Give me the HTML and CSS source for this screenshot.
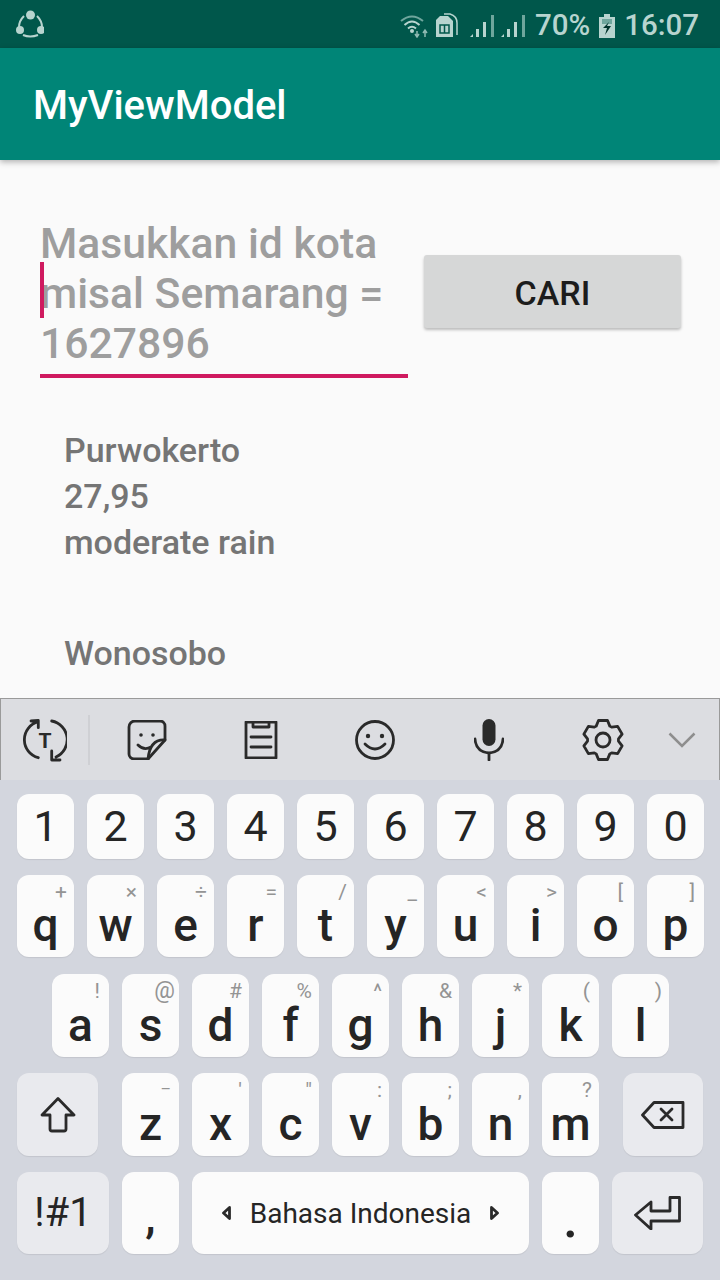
FILE: index.html
```html
<!DOCTYPE html>
<html lang="en">
  <head>
    <meta charset="UTF-8" />
    <meta name="viewport" content="width=device-width, initial-scale=1.0" />
    <title>MyViewModel</title>

    <link rel="stylesheet" href="styles.css">
  </head>
  <body>
    <!-- Status bar -->
    <div class="status-bar">
      <svg class="share-icon" width="28" height="28" viewBox="0 0 28 28">
        <path d="M8 6 Q3 11 3 17 M21 6 Q26 11 26 17 M7 25 Q14 28 22 25" fill="none" stroke="#b7d4cf" stroke-width="2" />
        <circle cx="14.5" cy="5" r="4.5" fill="#b7d4cf" />
        <circle cx="4" cy="20" r="4" fill="#b7d4cf" />
        <circle cx="25" cy="20" r="4" fill="#b7d4cf" />
      </svg>
      <div class="status-right">
        <svg class="wifi-icon" width="29" height="24" viewBox="0 0 29 24">
          <path d="M1 7 Q12 -2 23 7" fill="none" stroke="#6fa69d" stroke-width="2" />
          <path d="M4.5 11 Q12 4 19.500 11" fill="none" stroke="#b7d4cf" stroke-width="2" />
          <path d="M8 14.500 Q12 11 16 14.500" fill="none" stroke="#b7d4cf" stroke-width="2" />
          <circle cx="12" cy="17" r="2" fill="#b7d4cf" />
          <path d="M17 17 v5 M15 20 l2 3 l2 -3" fill="none" stroke="#8fbab3" stroke-width="1.500" />
          <path d="M25 23 v-6 M23 19 l2 -3 l2 3" fill="none" stroke="#8fbab3" stroke-width="1.500" />
        </svg>
        <svg class="sim-icon" width="23" height="25" viewBox="0 0 23 25">
          <path d="M5 3 H13 L18 8 V24 H1 V7 Z" fill="#b7d4cf" />
          <path d="M9 1 H15 Q22 3 22 10 V22" fill="none" stroke="#b7d4cf" stroke-width="1.500" />
          <rect x="5" y="12" width="9" height="8" fill="none" stroke="#00574b" stroke-width="1.500" />
          <path d="M9.500 12 v8" stroke="#00574b" stroke-width="1.500" />
        </svg>
        <svg class="signal-icon" width="25" height="24" viewBox="0 0 25 24">
          <path d="M0 23 L3 20 V23 Z" fill="#b7d4cf" />
          <rect x="6" y="15" width="3" height="8" fill="#b7d4cf" />
          <rect x="13" y="8" width="3" height="15" fill="#b7d4cf" />
          <rect x="21" y="1" width="3" height="22" fill="#6fa69d" />
        </svg>
        <svg class="signal-icon" width="25" height="24" viewBox="0 0 25 24">
          <path d="M0 23 L3 20 V23 Z" fill="#b7d4cf" />
          <rect x="6" y="15" width="3" height="8" fill="#b7d4cf" />
          <rect x="13" y="8" width="3" height="15" fill="#b7d4cf" />
          <rect x="21" y="1" width="3" height="22" fill="#6fa69d" />
        </svg>
        <span class="battery-text">70%</span>
        <svg class="battery-icon" width="16" height="24" viewBox="0 0 16 24">
          <path d="M5 0 H11 V3 H16 V24 H0 V3 H5 Z" fill="#b7d4cf" />
          <path d="M3 5 H13 V10 H3 Z" fill="#6fa69d" />
          <path d="M10 8 L4 14 H8 L6 21 L12 12 H8 Z" fill="#00332c" />
        </svg>
        <span class="clock">16:07</span>
      </div>
    </div>

    <!-- App bar -->
    <div class="app-bar">
      <h1 class="app-title">MyViewModel</h1>
    </div>

    <!-- Main content -->
    <div class="content">
      <div class="search-row">
        <div class="edit-text">
          <span class="cursor"></span>
          Masukkan id kota misal Semarang = 1627896
        </div>
        <button class="search-button">CARI</button>
      </div>

      <div class="weather-list">
        <div class="weather-item">Purwokerto<br />27,95<br />moderate rain</div>
        <div class="weather-item">Wonosobo</div>
      </div>
    </div>

    <!-- Keyboard -->
    <div class="keyboard">
      <div class="toolbar">
        <div class="tool tool-first">
          <svg width="44" height="44" viewBox="0 0 44 44">
            <path d="M15.300 3.700 A18.600 18.600 0 0 0 15.300 39.700 M8 3 L15.300 2.500 V9.700" class="line" />
            <path d="M28.700 3 A19 19 0 0 1 33 39 M28.700 33 V42 H37" class="line" />
            <text x="22" y="30" class="tool-t">T</text>
          </svg>
        </div>
        <div class="tool-sep"></div>
        <div class="tool">
          <svg width="40" height="40" viewBox="0 0 40 40">
            <path d="M8 1 H33 A5 5 0 0 1 38 6 V20 L21 39 H7 A5 5 0 0 1 2 34 V7 A6 6 0 0 1 8 1 Z" class="line" />
            <path d="M38 20 Q23 19 21 39 M11 25 Q17 31 24 27" class="line" />
            <circle cx="14" cy="15" r="1.800" class="dot" />
            <circle cx="26" cy="15" r="1.800" class="dot" />
          </svg>
        </div>
        <div class="tool">
          <svg width="34" height="38" viewBox="0 0 34 38">
            <path d="M2 1 H32 V37 H2 Z M9 1 V6 H25 V1" class="line" />
            <path d="M7 16 H27 M7 26 H27" class="line" />
          </svg>
        </div>
        <div class="tool">
          <svg width="40" height="40" viewBox="0 0 40 40">
            <circle cx="20" cy="20" r="18.500" class="line" />
            <circle cx="13" cy="16" r="2.200" class="dot" />
            <circle cx="27" cy="16" r="2.200" class="dot" />
            <path d="M10 24 Q20 34 30 24" class="line" />
          </svg>
        </div>
        <div class="tool">
          <svg width="30" height="42" viewBox="0 0 30 42">
            <rect x="8.500" y="0" width="13" height="27" rx="6.500" class="dot" />
            <path d="M1 20 Q2 33 15 34 Q28 33 29 20 M15 34 V41" class="line" />
          </svg>
        </div>
        <div class="tool">
          <svg width="42" height="42" viewBox="-21 -21 42 42">
            <path d="M-6.800 -13.900 L-4.500 -19.500 L4.500 -19.500 L6.800 -13.900 L8.670 -12.850 L14.630 -13.640 L19.130 -5.850 L15.460 -1.080 L15.460 1.080 L19.130 5.850 L14.630 13.640 L8.670 12.850 L6.800 13.900 L4.500 19.500 L-4.500 19.500 L-6.800 13.900 L-8.670 12.850 L-14.630 13.640 L-19.130 5.850 L-15.460 1.080 L-15.460 -1.080 L-19.130 -5.850 L-14.630 -13.640 L-8.670 -12.850 Z" class="line" />
            <circle cx="0" cy="0" r="7" class="line" />
          </svg>
        </div>
        <div class="tool tool-last">
          <svg width="28" height="16" viewBox="0 0 28 16">
            <path d="M1.500 1.500 L14 14 L26.500 1.500" class="chevron" />
          </svg>
        </div>
      </div>

      <div class="keys">
        <div class="key-row row-digits">
          <div class="key"><span>1</span></div>
          <div class="key"><span>2</span></div>
          <div class="key"><span>3</span></div>
          <div class="key"><span>4</span></div>
          <div class="key"><span>5</span></div>
          <div class="key"><span>6</span></div>
          <div class="key"><span>7</span></div>
          <div class="key"><span>8</span></div>
          <div class="key"><span>9</span></div>
          <div class="key"><span>0</span></div>
        </div>
        <div class="key-row row-top">
          <div class="key"><i>+</i><span>q</span></div>
          <div class="key"><i>×</i><span>w</span></div>
          <div class="key"><i>÷</i><span>e</span></div>
          <div class="key"><i>=</i><span>r</span></div>
          <div class="key"><i>/</i><span>t</span></div>
          <div class="key"><i>_</i><span>y</span></div>
          <div class="key"><i>&lt;</i><span>u</span></div>
          <div class="key"><i>&gt;</i><span>i</span></div>
          <div class="key"><i class="sym-bracket">[</i><span>o</span></div>
          <div class="key"><i class="sym-bracket-end">]</i><span>p</span></div>
        </div>
        <div class="key-row row-home">
          <div class="key"><i class="sym-bang">!</i><span>a</span></div>
          <div class="key"><i class="sym-at">@</i><span>s</span></div>
          <div class="key"><i>#</i><span>d</span></div>
          <div class="key"><i>%</i><span>f</span></div>
          <div class="key"><i>^</i><span>g</span></div>
          <div class="key"><i>&amp;</i><span>h</span></div>
          <div class="key"><i>*</i><span>j</span></div>
          <div class="key"><i class="sym-bang">(</i><span>k</span></div>
          <div class="key"><i>)</i><span>l</span></div>
        </div>
        <div class="key-row row-bottom">
          <div class="key key-fn key-shift">
            <svg width="36" height="36" viewBox="0 0 36 36">
              <path d="M18 1.500 L34 18 H26 V32 A2 2 0 0 1 24 34 H12 A2 2 0 0 1 10 32 V18 H2 Z" class="line" />
            </svg>
          </div>
          <div class="key"><i class="sym-dash">–</i><span>z</span></div>
          <div class="key"><i>'</i><span>x</span></div>
          <div class="key"><i>"</i><span>c</span></div>
          <div class="key"><i>:</i><span>v</span></div>
          <div class="key"><i>;</i><span>b</span></div>
          <div class="key"><i>,</i><span>n</span></div>
          <div class="key"><i>?</i><span>m</span></div>
          <div class="key key-fn key-back">
            <svg width="44" height="28" viewBox="0 0 44 28">
              <path d="M1.500 14 L13 1.500 H42 V26.500 H13 Z" class="line" />
              <path d="M20 8 L31 19 M31 8 L20 19" class="line" />
            </svg>
          </div>
        </div>
        <div class="key-row row-space">
          <div class="key key-fn key-symbols"><span>!#1</span></div>
          <div class="key key-comma"><span>,</span></div>
          <div class="key key-space">
            <svg width="9" height="14" viewBox="0 0 9 14"><path d="M7.500 1.500 L1.500 7 L7.500 12.500 Z" class="line" /></svg>
            <span>Bahasa Indonesia</span>
            <svg width="9" height="14" viewBox="0 0 9 14"><path d="M1.500 1.500 L7.500 7 L1.500 12.500 Z" class="line" /></svg>
          </div>
          <div class="key key-period"><span>.</span></div>
          <div class="key key-fn key-enter">
            <svg width="47" height="34" viewBox="0 0 47 34">
              <path d="M1.500 19 L17 6 V15 H36 V1.500 H45.500 V25 H17 V33 Z" class="line" />
            </svg>
          </div>
        </div>
      </div>
    </div>
  </body>
</html>
```

FILE: styles.css
```css
* {
  box-sizing: border-box;
}

html,
body {
  margin: 0;
  height: 1280px;
  overflow: hidden;
}

body {
  display: flex;
  flex-direction: column;
  width: 720px;
  background: #fafafa;
  font-family: Roboto, "Noto Sans", sans-serif;
}

/* Status bar */
.status-bar {
  flex: none;
  display: flex;
  justify-content: space-between;
  align-items: center;
  height: 48px;
  padding: 0 21px 0 16px;
  background: #00574b;
  color: #b7d4cf;
}

.status-right {
  display: flex;
  align-items: center;
  padding-top: 3px;
}

.wifi-icon {
  margin-right: 6px;
}

.sim-icon {
  margin-right: 12px;
}

.signal-icon {
  margin-right: 6px;
}

.signal-icon + .battery-text {
  margin-left: 3px;
}

.battery-text,
.clock {
  font-size: 29.500px;
  font-weight: 500;
  line-height: 45px;
}

.battery-icon {
  margin: 0 9px;
}

/* App bar */
.app-bar {
  position: relative;
  z-index: 1;
  flex: none;
  display: flex;
  align-items: center;
  height: 112px;
  padding: 3px 33px 0;
  background: #008577;
  box-shadow: 0 2px 6px rgba(0, 0, 0, 0.3);
}

.app-title {
  margin: 0;
  color: #fff;
  font-size: 40px;
  font-weight: 500;
}

/* Main content */
.content {
  flex: 1;
  min-height: 0;
  overflow: hidden;
}

.search-row {
  display: flex;
  align-items: flex-start;
  padding: 58px 0 0 40px;
}

.edit-text {
  position: relative;
  width: 368px;
  height: 160px;
  border-bottom: 4px solid #cf1a5f;
  color: #9e9e9e;
  font-size: 42.700px;
  font-weight: 500;
  line-height: 50px;
}

.cursor {
  position: absolute;
  left: 0;
  top: 44px;
  width: 4px;
  height: 56px;
  background: #cf1a5f;
}

.search-button {
  width: 257px;
  height: 73px;
  margin: 37px 0 0 16px;
  padding-top: 3px;
  border: 0;
  border-radius: 3px;
  background: #d6d7d7;
  box-shadow: 0 2px 3px rgba(0, 0, 0, 0.25);
  color: #1c1c1c;
  font-family: inherit;
  font-size: 34px;
  font-weight: 500;
}

.weather-list {
  margin: 49px 0 0 64px;
  color: #757575;
  font-size: 34px;
  font-weight: 500;
  line-height: 46px;
}

.weather-item {
  margin-bottom: 65px;
}

/* Keyboard */
.keyboard {
  flex: none;
  height: 582px;
  background: #d3d6de;
}

.toolbar {
  display: flex;
  align-items: center;
  height: 82px;
  border: 1px solid #9a9a9a;
  border-bottom: 0;
  background: #dcdde1;
}

.tool {
  display: flex;
  justify-content: center;
  align-items: center;
  width: 114px;
}

.tool-first {
  width: 87px;
}

.tool-last {
  width: 44px;
}

.tool-sep {
  width: 2px;
  height: 50px;
  background: #cfd0d4;
}

.line {
  fill: none;
  stroke: #2a2a2a;
  stroke-width: 2.800;
  stroke-linejoin: round;
  stroke-linecap: round;
}

.dot {
  fill: #2a2a2a;
}

.chevron {
  fill: none;
  stroke: #8e8e8e;
  stroke-width: 2.500;
}

.tool-t {
  fill: #2a2a2a;
  font-size: 21px;
  font-weight: 700;
  text-anchor: middle;
}

.keys {
  display: flex;
  flex-direction: column;
  padding: 14px 17px 0;
}

.key-row {
  display: flex;
  gap: 13px;
  height: 82px;
  margin-bottom: 16px;
}

.row-digits {
  height: 65px;
}

.row-top {
  margin-bottom: 17px;
}

.row-home {
  height: 83px;
  padding-left: 35px;
}

.row-bottom {
  height: 83px;
}

.key {
  position: relative;
  display: flex;
  justify-content: center;
  align-items: flex-end;
  flex: none;
  width: 57px;
  padding-bottom: 9px;
  border-radius: 12px;
  background: #fbfbfb;
  box-shadow: 0 1px 1px rgba(0, 0, 0, 0.08);
  color: #252525;
  font-size: 46px;
  font-weight: 500;
  line-height: 46px;
}

.row-digits .key {
  padding-bottom: 10px;
  font-size: 43px;
  font-weight: 400;
}

/* Small symbol in the corner of a letter key */
.key i {
  position: absolute;
  top: 7px;
  right: 7px;
  color: #949494;
  font-size: 21px;
  font-style: normal;
  font-weight: 400;
  line-height: 20px;
}

.key i.sym-at {
  right: 4px;
  font-size: 23px;
}

.key i.sym-bang {
  right: 9px;
}

.key i.sym-bracket {
  right: 11px;
}

.key i.sym-bracket-end {
  right: 9px;
}

.key i.sym-dash {
  right: 8px;
  font-size: 16px;
}

.key-fn {
  align-items: center;
  padding-bottom: 0;
  background: #e9eaee;
}

.key-shift {
  width: 81px;
  margin-right: 11px;
}

.key-back {
  width: 80px;
  margin-left: 11px;
}

.key-symbols {
  width: 92px;
  font-size: 40px;
  font-weight: 400;
}

.key-comma {
  padding-bottom: 15px;
}

.key-period {
  padding-bottom: 12px;
  font-size: 54px;
}

.key-space {
  align-items: center;
  gap: 19px;
  width: 337px;
  padding-bottom: 0;
  font-size: 28px;
  font-weight: 400;
}

.key-space span {
  padding-top: 2px;
}

.key-enter {
  width: 91px;
}
```
